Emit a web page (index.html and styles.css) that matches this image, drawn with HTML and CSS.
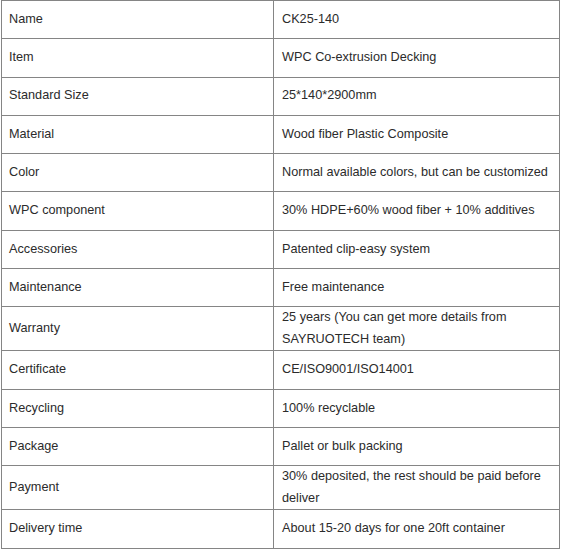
FILE: index.html
```html
<!DOCTYPE html>
<html>
<head>
<meta charset="utf-8">
<link rel="stylesheet" href="styles.css">
</head>
<body>
<div class="spec">
  <div class="cell key">Name</div><div class="cell">CK25-140</div>
  <div class="cell key">Item</div><div class="cell">WPC Co-extrusion Decking</div>
  <div class="cell key">Standard Size</div><div class="cell">25*140*2900mm</div>
  <div class="cell key">Material</div><div class="cell">Wood fiber Plastic Composite</div>
  <div class="cell key">Color</div><div class="cell">Normal available colors, but can be customized</div>
  <div class="cell key">WPC component</div><div class="cell">30% HDPE+60% wood fiber + 10% additives</div>
  <div class="cell key">Accessories</div><div class="cell">Patented clip-easy system</div>
  <div class="cell key">Maintenance</div><div class="cell">Free maintenance</div>
  <div class="cell key">Warranty</div><div class="cell">25 years (You can get more details from SAYRUOTECH team)</div>
  <div class="cell key">Certificate</div><div class="cell">CE/ISO9001/ISO14001</div>
  <div class="cell key">Recycling</div><div class="cell">100% recyclable</div>
  <div class="cell key">Package</div><div class="cell">Pallet or bulk packing</div>
  <div class="cell key">Payment</div><div class="cell">30% deposited, the rest should be paid before deliver</div>
  <div class="cell key">Delivery time</div><div class="cell">About 15-20 days for one 20ft container</div>
</div>
</body>
</html>
```

FILE: styles.css
```css
html, body {
  margin: 0;
  padding: 0;
  background: #fff;
}

.spec {
  margin-left: 1px;
  width: 559px;
  box-sizing: border-box;
  display: grid;
  grid-template-columns: 271px 285px;
  gap: 1px;
  padding: 1px;
  background: #858585;
  font-family: "Liberation Sans", Arial, sans-serif;
  font-size: 12.7px;
  color: #2b2b2b;
}

.cell {
  background: #fff;
  display: flex;
  align-items: center;
  min-height: 37.3px;
  line-height: 21.5px;
  padding: 0 8px;
}

.key {
  padding-left: 7px;
}
```
